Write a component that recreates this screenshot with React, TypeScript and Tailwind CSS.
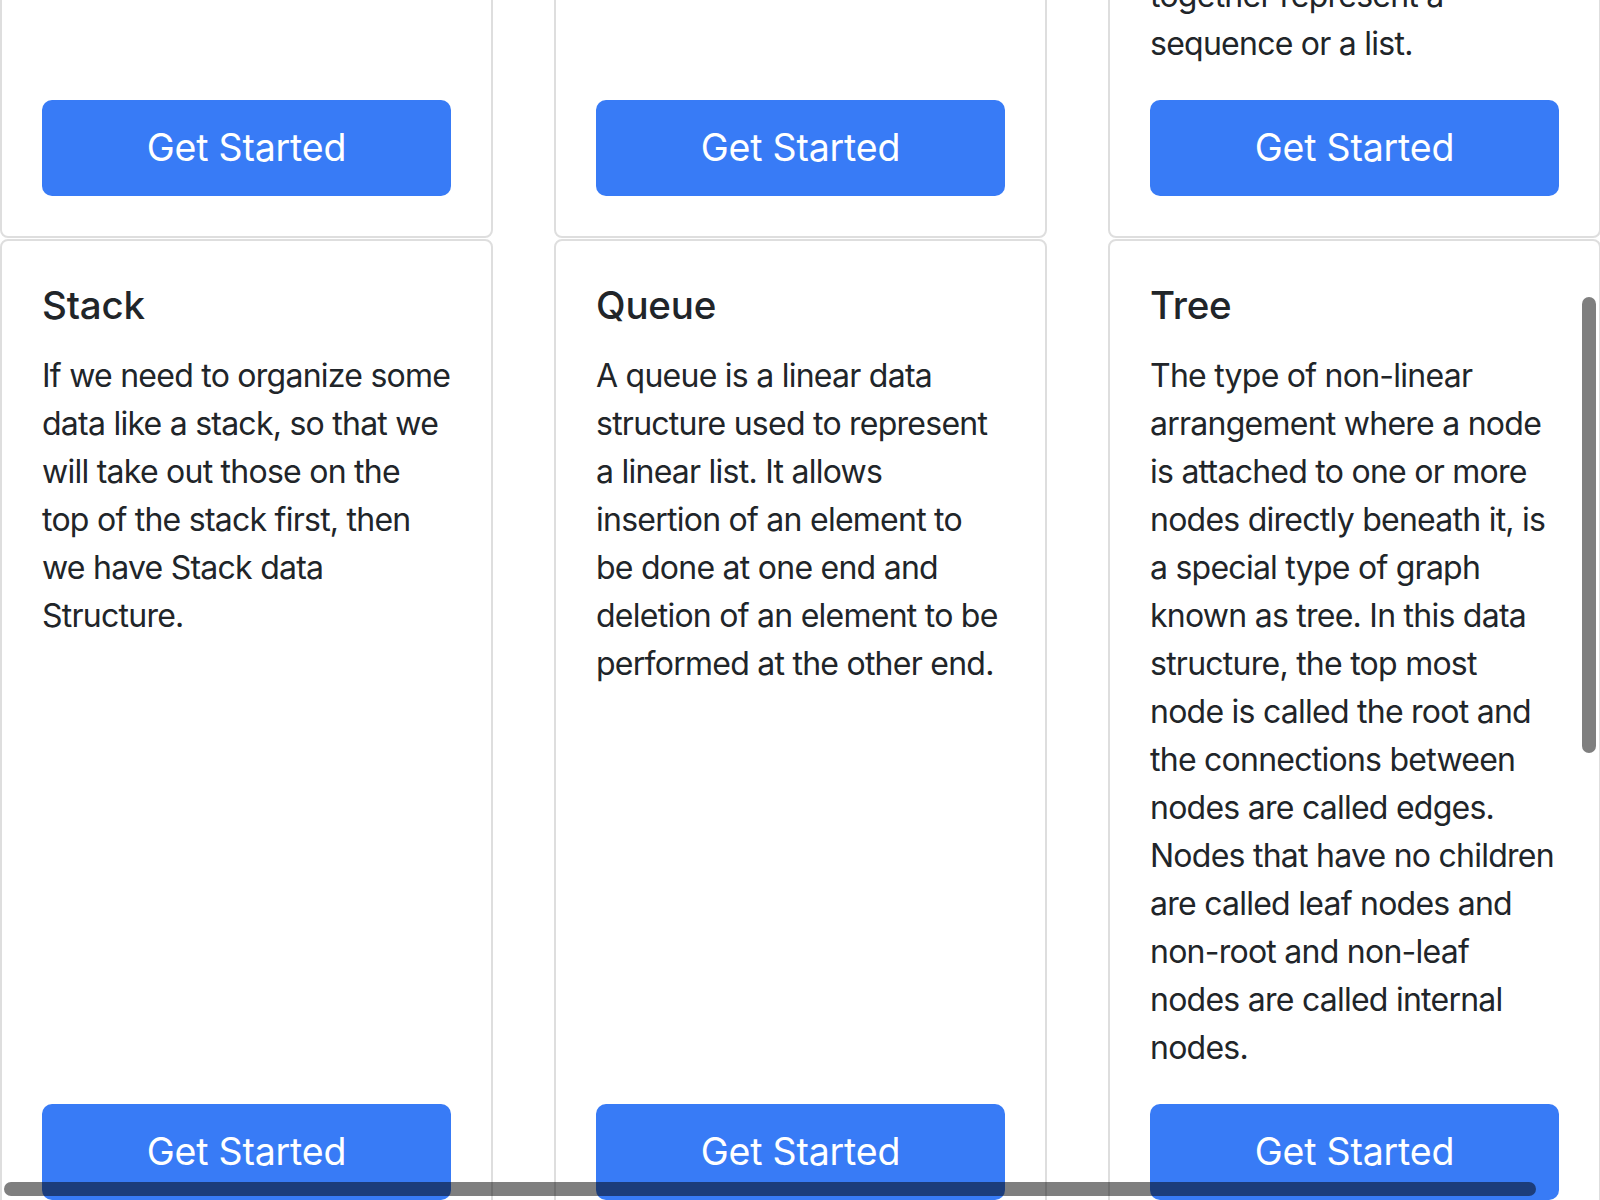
import React from "react";

type Topic = {
  title?: string;
  lines: string[];
};

const topRow: Topic[] = [
  { lines: [] },
  { lines: [] },
  { lines: ["together represent a", "sequence or a list."] },
];

const bottomRow: Topic[] = [
  {
    title: "Stack",
    lines: [
      "If we need to organize some",
      "data like a stack, so that we",
      "will take out those on the",
      "top of the stack first, then",
      "we have Stack data",
      "Structure.",
    ],
  },
  {
    title: "Queue",
    lines: [
      "A queue is a linear data",
      "structure used to represent",
      "a linear list. It allows",
      "insertion of an element to",
      "be done at one end and",
      "deletion of an element to be",
      "performed at the other end.",
    ],
  },
  {
    title: "Tree",
    lines: [
      "The type of non-linear",
      "arrangement where a node",
      "is attached to one or more",
      "nodes directly beneath it, is",
      "a special type of graph",
      "known as tree. In this data",
      "structure, the top most",
      "node is called the root and",
      "the connections between",
      "nodes are called edges.",
      "Nodes that have no children",
      "are called leaf nodes and",
      "non-root and non-leaf",
      "nodes are called internal",
      "nodes.",
    ],
  },
];

function Card({ topic, cut }: { topic: Topic; cut?: boolean }) {
  return (
    <div
      className={`flex w-[493px] shrink-0 flex-col rounded-[8px] border-2 border-[#dedede] bg-white px-[40px] pb-[40px] ${
        cut ? "pt-0" : "pt-[40px]"
      }`}
    >
      {topic.title && (
        <h5 className="mb-[23px] text-[38.5px] font-medium leading-[48px] tracking-[-0.2px]">
          {topic.title}
        </h5>
      )}
      {topic.lines.length > 0 && (
        <p className="mb-[32px] text-[32px] leading-[48px] tracking-[-0.75px]">
          {topic.lines.map((l, i) => (
            <span key={i} className="block whitespace-nowrap">
              {l}
            </span>
          ))}
        </p>
      )}
      <button
        type="button"
        className="mt-auto h-[96px] w-full shrink-0 rounded-[10px] bg-[#387bf6] text-[37.5px] leading-[48px] tracking-[-0.2px] text-white"
      >
        Get Started
      </button>
    </div>
  );
}

export default function App() {
  return (
    <div className="relative h-[1200px] w-full overflow-hidden bg-white font-['Inter','Noto_Sans',sans-serif] text-[#212529]">
      <div className="-mt-[30px] flex flex-col gap-[1px]">
        <div className="flex gap-[61px]">
          {topRow.map((t, i) => (
            <Card key={i} topic={t} cut />
          ))}
        </div>
        <div className="flex gap-[61px]">
          {bottomRow.map((t, i) => (
            <Card key={i} topic={t} />
          ))}
        </div>
      </div>

      {/* overlay scrollbars */}
      <div className="absolute left-[1582px] top-[297px] h-[456px] w-[14px] rounded-full bg-black/50" />
      <div className="absolute left-[4px] top-[1182px] h-[14px] w-[1532px] rounded-full bg-black/50" />
    </div>
  );
}
